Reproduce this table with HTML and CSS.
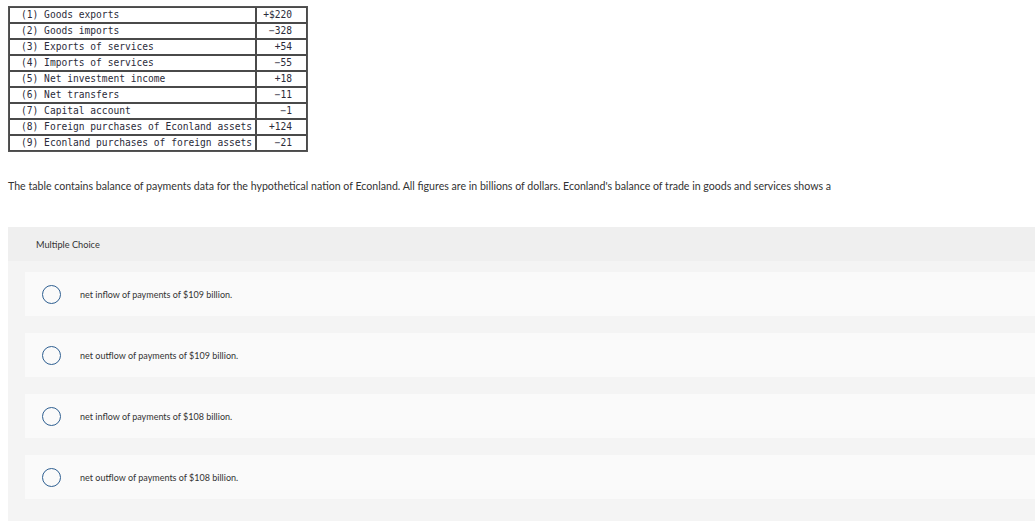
FILE: index.html
```html
<!DOCTYPE html>
<html>
<head>
<meta charset="utf-8">
<link rel="stylesheet" href="styles.css">
</head>
<body>
<table class="bop">
  <tr><td class="lbl">(1) Goods exports</td><td class="val">+$220</td></tr>
  <tr><td class="lbl">(2) Goods imports</td><td class="val">&minus;328</td></tr>
  <tr><td class="lbl">(3) Exports of services</td><td class="val">+54</td></tr>
  <tr><td class="lbl">(4) Imports of services</td><td class="val">&minus;55</td></tr>
  <tr><td class="lbl">(5) Net investment income</td><td class="val">+18</td></tr>
  <tr><td class="lbl">(6) Net transfers</td><td class="val">&minus;11</td></tr>
  <tr><td class="lbl">(7) Capital account</td><td class="val">&minus;1</td></tr>
  <tr><td class="lbl">(8) Foreign purchases of Econland assets</td><td class="val">+124</td></tr>
  <tr><td class="lbl">(9) Econland purchases of foreign assets</td><td class="val">&minus;21</td></tr>
</table>

<p class="question">The table contains balance of payments data for the hypothetical nation of Econland. All figures are in billions of dollars. Econland's balance of trade in goods and services shows a</p>

<div class="mc">
  <div class="mc-head">Multiple Choice</div>
  <div class="mc-body">
    <div class="opt"><span class="radio"></span><span class="opt-text">net inflow of payments of $109 billion.</span></div>
    <div class="opt"><span class="radio"></span><span class="opt-text">net outflow of payments of $109 billion.</span></div>
    <div class="opt"><span class="radio"></span><span class="opt-text">net inflow of payments of $108 billion.</span></div>
    <div class="opt"><span class="radio"></span><span class="opt-text">net outflow of payments of $108 billion.</span></div>
  </div>
</div>
</body>
</html>
```
FILE: styles.css
```css
html, body {
  margin: 0;
  padding: 0;
  background: #fff;
}
body {
  padding: 6px 0 0 8px;
  font-family: Lato, "Open Sans", sans-serif;
  color: #333;
  overflow: hidden;
}
.bop {
  border-collapse: separate;
  border-spacing: 0;
  border: 1px solid #555;
  font-family: "DejaVu Sans Mono", monospace;
  font-size: 9.6px;
  color: #2b2b3a;
}
.bop td {
  border: 1px solid #4a4a4a;
  height: 14px;
  padding: 0;
  line-height: 14px;
  white-space: pre;
}
.bop .lbl {
  padding: 0 3px 0 11px;
}
.bop .val {
  width: 35px;
  text-align: right;
  padding: 0 14px 0 0;
}
.question {
  margin: 28px 0 0 0;
  font-size: 10.6px;
  line-height: 13px;
  color: #333;
}
.mc {
  margin-top: 34px;
  background: #f4f4f4;
  width: 1040px;
  padding-bottom: 30px;
}
.mc-head {
  background: #efefef;
  height: 34px;
  display: flex;
  align-items: center;
  padding-left: 28px;
  font-size: 9.2px;
  color: #333;
}
.mc-body {
  display: flex;
  flex-direction: column;
  gap: 17px;
  padding: 11px 0 0 17px;
}
.opt {
  background: #fafafa;
  height: 44px;
  display: flex;
  align-items: center;
  padding-left: 17px;
}
.radio {
  width: 17px;
  height: 17px;
  border: 1.5px solid #2e5f91;
  border-radius: 50%;
  flex: none;
}
.opt-text {
  margin-left: 19px;
  font-size: 9px;
  color: #333;
}
```
